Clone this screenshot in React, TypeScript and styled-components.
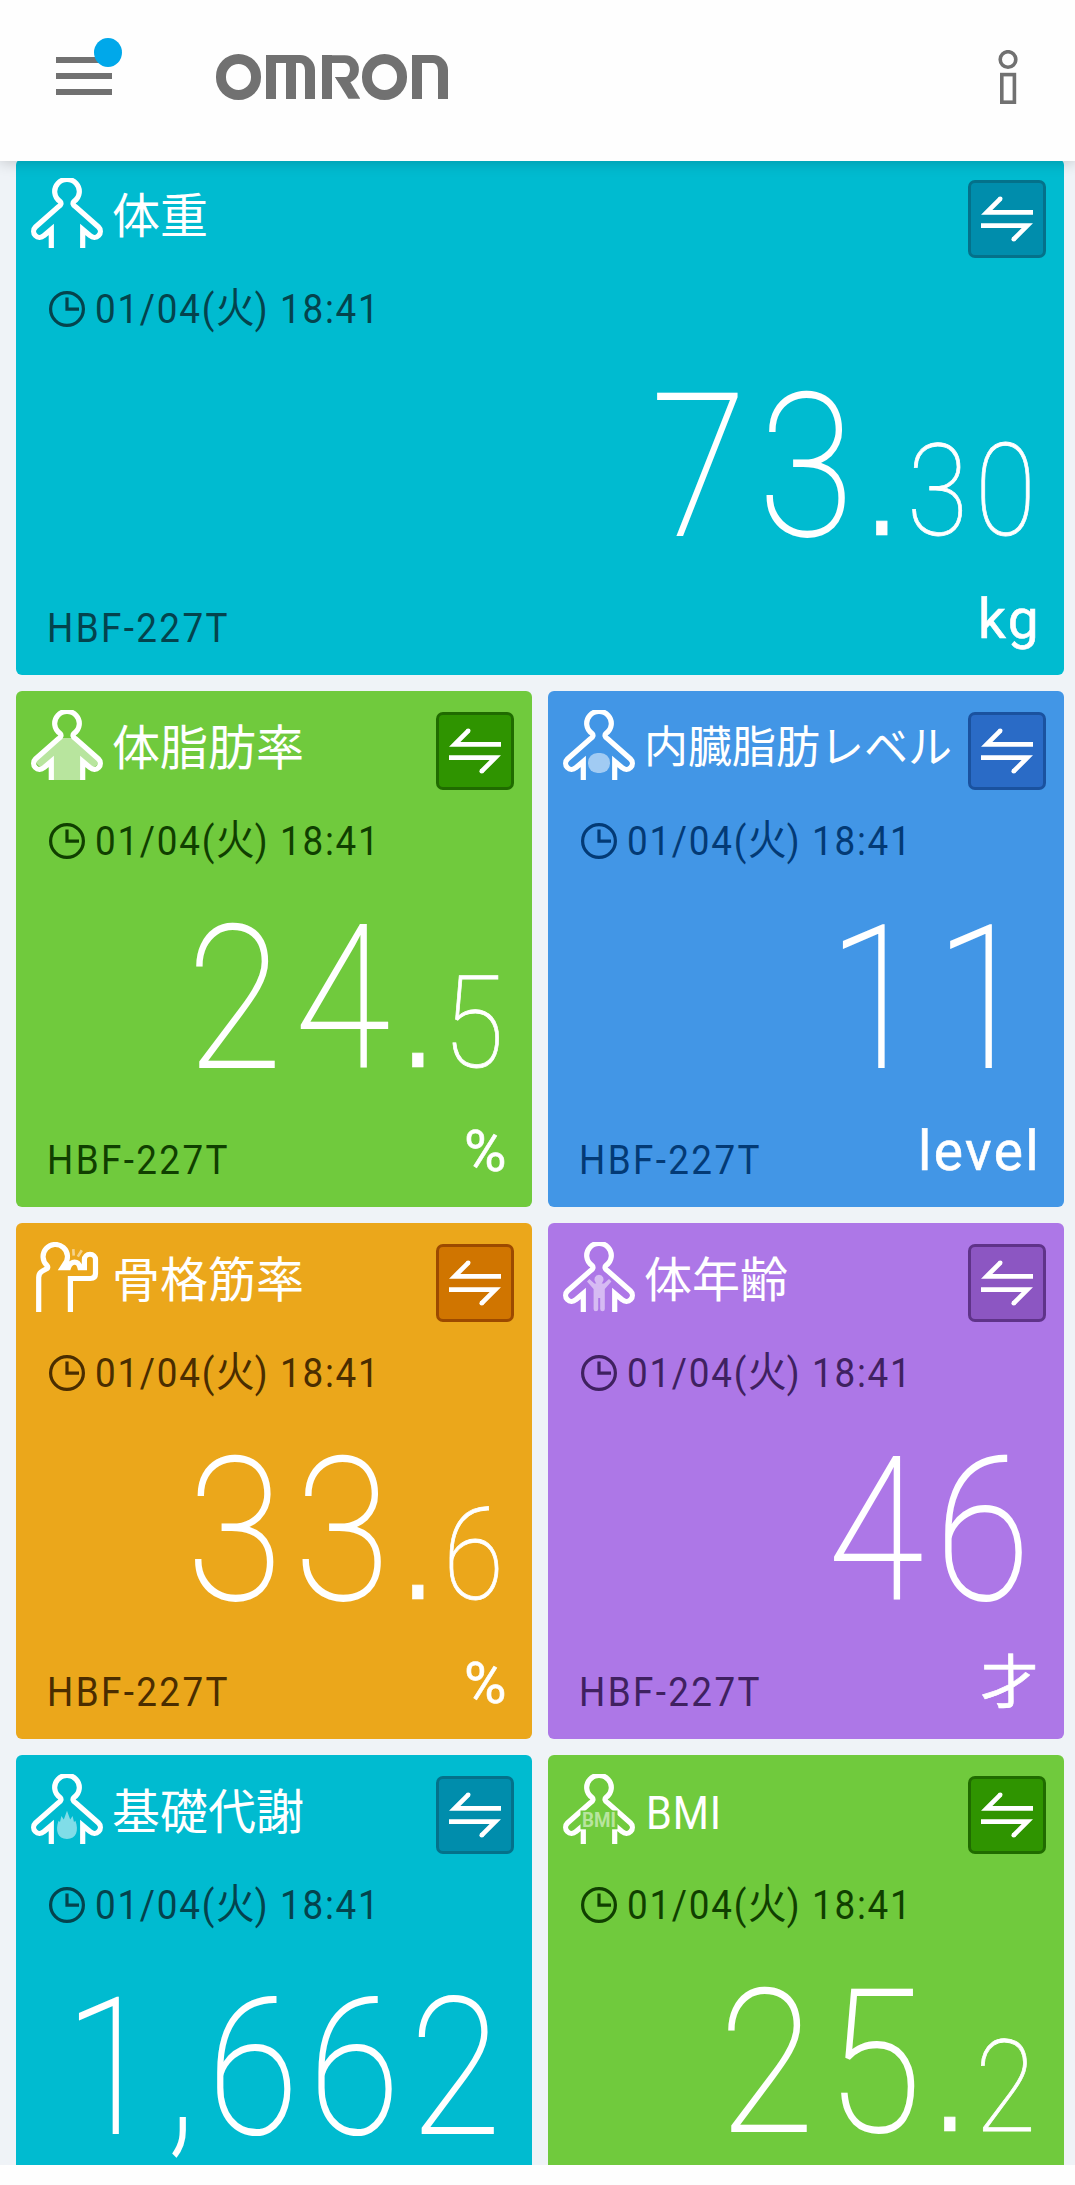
import React from "react";
import styled, { createGlobalStyle } from "styled-components";

const latin = `Roboto, "Noto Sans CJK JP", "Noto Sans", sans-serif`;
const japanese = `"Noto Sans CJK JP", Roboto, sans-serif`;
const ink = "#717171";

type Theme = { bg: string; text: string; button: string; edge: string };

const cyan: Theme = { bg: "#00bbd0", text: "#04434d", button: "#008dac", edge: "#04718a" };
const green: Theme = { bg: "#70ca3d", text: "#103f00", button: "#2f9400", edge: "#206b00" };
const blue: Theme = { bg: "#4296e6", text: "#033a75", button: "#2a6bc6", edge: "#1a529f" };
const orange: Theme = { bg: "#eba71b", text: "#4a2d00", button: "#d07500", edge: "#9c4a00" };
const purple: Theme = { bg: "#ad77e7", text: "#3f2160", button: "#8c56c2", edge: "#5f3389" };

const GlobalStyle = createGlobalStyle`
  * { box-sizing: border-box; }
  body { margin: 0; background: #fefefe; }
`;

const Screen = styled.div`
  width: 1075px;
  height: 2165px;
  overflow: hidden;
  background: #eff3f7;
  font-family: ${latin};
`;

const Header = styled.header`
  position: relative;
  z-index: 1;
  display: flex;
  align-items: flex-start;
  height: 161px;
  padding: 0 56px;
  background: #fefefe;
  box-shadow: 0 1px 14px rgba(0, 0, 0, 0.2);
`;

const MenuButton = styled.div`
  position: relative;
  display: flex;
  flex-direction: column;
  gap: 10px;
  width: 56px;
  margin-top: 57px;
`;

const MenuBar = styled.span`
  height: 6px;
  background: ${ink};
`;

const Badge = styled.span`
  position: absolute;
  top: -19px;
  left: 38px;
  width: 28px;
  height: 29px;
  border-radius: 50%;
  background: #00a8ea;
`;

const Logo = styled.div`
  display: flex;
  align-items: center;
  height: 46px;
  margin: 54px 0 0 104px;
`;

const Ring = styled.i`
  width: 45.4px;
  height: 45.4px;
  border: 10px solid ${ink};
  border-radius: 50%;
`;

const Arches = styled.i`
  display: flex;
  height: 43.4px;
  margin: 0 7px 0 4.3px;
`;

const Arch = styled.i<{ $width: number; $round?: boolean; $joined?: boolean }>`
  width: ${(p) => p.$width}px;
  height: 43.4px;
  margin-left: ${(p) => (p.$joined ? -10 : 0)}px;
  border: solid ${ink};
  border-width: 8.4px 10px 0;
  border-top-right-radius: ${(p) => (p.$round ? 15 : 0)}px;
`;

const Stem = styled.i`
  position: relative;
  width: 37.8px;
  height: 43.4px;
  margin-right: 1.8px;
  border-left: 10px solid ${ink};
`;

const Bowl = styled.i`
  position: absolute;
  top: 0;
  left: -10px;
  width: 36.6px;
  height: 28.2px;
  border: solid ${ink};
  border-width: 8.4px 9.8px 6.6px 0;
  border-radius: 0 15px 14px 0;
  clip-path: polygon(0 0, 100% 0, 100% 100%, 17px 100%, 12.8px 21.6px, 0 21.6px);
`;

const Leg = styled.i`
  position: absolute;
  top: 21.6px;
  left: 2.8px;
  width: 25.2px;
  height: 21.8px;
  background: ${ink};
  clip-path: polygon(0 0, 12px 0, 15.5px 5.6px, 100% 100%, 13.4px 100%);
`;

const InfoIcon = styled.svg`
  width: 20px;
  height: 55px;
  margin: 50px 1px 0 auto;
`;

const Grid = styled.main`
  display: grid;
  grid-template-columns: 516px 516px;
  grid-auto-rows: 516px;
  gap: 16px;
  margin: -2px 0 0 16px;
`;

const CardBox = styled.section<{ $theme: Theme; $wide?: boolean }>`
  grid-column: ${(p) => (p.$wide ? "span 2" : "auto")};
  display: flex;
  flex-direction: column;
  border-radius: 6px;
  background: ${(p) => p.$theme.bg};
  color: #fff;
`;

const CardHead = styled.div`
  display: flex;
  align-items: flex-start;
  height: 132px;
  padding: 19px 18px 0 15px;
`;

const BodyIcon = styled.svg`
  flex: none;
  width: 72px;
  height: 70px;
`;

const Title = styled.h2<{ $size: number }>`
  margin: 0 0 0 9px;
  font: 400 ${(p) => p.$size}px/69px ${japanese};
  white-space: nowrap;
`;

const LatinTitle = styled(Title)`
  margin-left: 11px;
  font-family: ${latin};
  line-height: 78px;
  letter-spacing: 1px;
  transform: scaleX(0.9);
  transform-origin: left;
`;

const SwapButton = styled.div<{ $theme: Theme }>`
  flex: none;
  width: 78px;
  height: 78px;
  margin: 2px 0 0 auto;
  border: 3px solid ${(p) => p.$theme.edge};
  border-radius: 7px;
  background: ${(p) => p.$theme.button};
`;

const SwapArrows = styled.svg`
  display: block;
  width: 72px;
  height: 72px;
`;

const Measured = styled.div<{ $theme: Theme }>`
  display: flex;
  align-items: center;
  height: 36px;
  padding-left: 33px;
  color: ${(p) => p.$theme.text};
`;

const ClockIcon = styled.svg`
  width: 36px;
  height: 36px;
  margin-right: 10px;
`;

const Time = styled.span`
  font-size: 40px;
  line-height: 38px;
  letter-spacing: 1.9px;
  white-space: pre;
  transform: scaleX(0.92);
  transform-origin: left;
`;

const Weekday = styled.span`
  font-size: 42px;
  letter-spacing: 0;
`;

const Value = styled.div<{ $compact?: boolean }>`
  display: flex;
  justify-content: flex-end;
  align-items: baseline;
  height: 222px;
  padding: ${(p) => (p.$compact ? "45px 20px" : "40px 21px")} 0 0;
  font-size: ${(p) => (p.$compact ? 190 : 199)}px;
  font-weight: 100;
  line-height: 201px;
  letter-spacing: ${(p) => (p.$compact ? 12.4 : 14.4)}px;
  -webkit-text-stroke: 2px #fff;
`;

const Digits = styled.div`
  display: flex;
  align-items: baseline;
  transform: scaleX(0.87);
  transform-origin: right;
`;

const Point = styled.span`
  font-family: "Liberation Sans", sans-serif;
  font-size: 130px;
  font-weight: 400;
  letter-spacing: 11px;
  -webkit-text-stroke-width: 0.5px;
`;

const Decimals = styled.span`
  font-size: 128px;
  letter-spacing: 8px;
  -webkit-text-stroke-width: 0.8px;
`;

const CardFoot = styled.div`
  display: flex;
  justify-content: space-between;
  align-items: flex-start;
  margin-top: 40px;
  padding: 0 23px 0 31px;
`;

const Model = styled.span<{ $theme: Theme }>`
  margin-top: 10px;
  font-size: 40px;
  line-height: 60px;
  letter-spacing: 2.6px;
  color: ${(p) => p.$theme.text};
  transform: scaleX(0.92);
  transform-origin: left;
`;

const Unit = styled.span<{ $symbol: boolean }>`
  font-size: ${(p) => (p.$symbol ? 58 : 55)}px;
  line-height: 60px;
  letter-spacing: 2.4px;
  -webkit-text-stroke: 0.6px #fff;
`;

type Kind = "weight" | "fat" | "visceral" | "muscle" | "age" | "metabolism" | "bmi";

const outline =
  "M20.3 70V51.4L12.8 57.7A6 6 0 0 1 4.5 49L27.6 28.6Q31.5 26 29 23.4A12.3 12.1 0 1 1 43 23.4Q40.5 26 44.4 28.6L67.5 49A6 6 0 0 1 59.2 57.7L51.7 51.4V70";

function Figure({ kind, bg }: { kind: Kind; bg: string }) {
  const soft = "rgba(255,255,255,0.5)";
  if (kind === "muscle") {
    return (
      <BodyIcon viewBox="0 0 72 70" fill="none" stroke="#fff" strokeWidth="5.2">
        <path d="M7.7 70V35.5Q7.7 31 11.5 29L16 26.6Q17.6 25.4 16 23.5A12.2 12.1 0 1 1 33.5 22.5L31.5 25.6H37.5Q39.5 20.2 43.6 20.2T49 25.6H53.4V17.5A5.5 5.2 0 0 1 64.5 17.5V31.5Q64.5 36.5 59.5 36.5H39.4V70" />
        <path d="M42.3 7.2L42.7 13.7M50.8 8.2L46.8 14.6" stroke={soft} strokeWidth="2.6" />
      </BodyIcon>
    );
  }
  return (
    <BodyIcon viewBox="0 0 72 70" fill="none">
      {kind === "fat" && (
        <path d="M30 28H42L69 53L62 58L51.7 50V70H20.3V50L10 58L4 52Z" fill={soft} />
      )}
      <path d={outline} stroke="#fff" strokeWidth="5.2" />
      {kind === "visceral" && <rect x="25" y="43" width="22" height="20" rx="9.5" fill={soft} />}
      {kind === "age" && (
        <path
          d="M36 32.8a4.6 4.6 0 0 1 3.4 7.7l-.8 1.1 2.4 0 5-4.6 2.4 2.4-6.6 7.6V67a2.3 2.3 0 0 1-4.6 0V56h-2V67a2.3 2.3 0 0 1-4.6 0V47L24 39.4 26.4 37l5 4.6 2 0-.8-1.1A4.6 4.6 0 0 1 36 32.8Z"
          fill={soft}
        />
      )}
      {kind === "metabolism" && (
        <path
          d="M36 36.8L39.2 45.4L41.6 42L43 48L44.4 46.8C48 56.5 45.4 65 36 65C26.6 65 24 56.5 27.6 46.8L29 48L30.4 42L32.8 45.4Z"
          fill={soft}
        />
      )}
      {kind === "bmi" && (
        <g
          textAnchor="middle"
          fontFamily="Roboto, sans-serif"
          fontWeight="700"
          fontSize="19.6"
        >
          <rect x="17.5" y="36.5" width="37" height="18.8" fill={bg} />
          <text x="36" y="53.2" textLength="34" lengthAdjust="spacingAndGlyphs" fill="#b8e59e">
            BMI
          </text>
        </g>
      )}
    </BodyIcon>
  );
}

type Metric = {
  kind: Kind;
  title: string;
  titleSize?: number;
  theme: Theme;
  whole: string;
  decimals?: string;
  unit?: string;
};

const metrics: Metric[] = [
  { kind: "weight", title: "体重", theme: cyan, whole: "73", decimals: "30", unit: "kg" },
  { kind: "fat", title: "体脂肪率", theme: green, whole: "24", decimals: "5", unit: "%" },
  { kind: "visceral", title: "内臓脂肪レベル", titleSize: 44, theme: blue, whole: "11", unit: "level" },
  { kind: "muscle", title: "骨格筋率", theme: orange, whole: "33", decimals: "6", unit: "%" },
  { kind: "age", title: "体年齢", theme: purple, whole: "46", unit: "才" },
  { kind: "metabolism", title: "基礎代謝", theme: cyan, whole: "1,662" },
  { kind: "bmi", title: "BMI", titleSize: 46, theme: green, whole: "25", decimals: "2" },
];

function Card({ metric }: { metric: Metric }) {
  const { kind, title, titleSize = 48, theme, whole, decimals, unit } = metric;
  const Heading = kind === "bmi" ? LatinTitle : Title;
  return (
    <CardBox $theme={theme} $wide={kind === "weight"}>
      <CardHead>
        <Figure kind={kind} bg={theme.bg} />
        <Heading $size={titleSize}>{title}</Heading>
        <SwapButton $theme={theme}>
          <SwapArrows viewBox="3 3 72 72" fill="none" stroke="#fff" strokeWidth="4.7">
            <path d="M32.2 18.8L18.7 32.3H65M13 45.7H59.3L45.8 59.2" />
            <g fill="#fff" stroke="none">
              <circle cx="32.2" cy="18.8" r="2.35" />
              <circle cx="45.8" cy="59.2" r="2.35" />
            </g>
          </SwapArrows>
        </SwapButton>
      </CardHead>
      <Measured $theme={theme}>
        <ClockIcon viewBox="0 0 36 36" fill="none" stroke="currentColor" strokeWidth="3.2">
          <circle cx="18" cy="18" r="16.4" />
          <path d="M18 6.6V18.2H30" />
        </ClockIcon>
        <Time>
          01/04(<Weekday>火</Weekday>) 18:41
        </Time>
      </Measured>
      <Value $compact={whole.length > 3}>
        <Digits>
          <span>{whole}</span>
          {decimals && <Point>.</Point>}
          {decimals && <Decimals>{decimals}</Decimals>}
        </Digits>
      </Value>
      {unit && (
        <CardFoot>
          <Model $theme={theme}>HBF-227T</Model>
          <Unit $symbol={unit.length === 1}>{unit}</Unit>
        </CardFoot>
      )}
    </CardBox>
  );
}

export default function App() {
  return (
    <>
      <GlobalStyle />
      <Screen>
        <Header>
          <MenuButton>
            <MenuBar />
            <MenuBar />
            <MenuBar />
            <Badge />
          </MenuButton>
          <Logo role="img" aria-label="OMRON">
            <Ring />
            <Arches>
              <Arch $width={30} />
              <Arch $width={29.6} $round $joined />
            </Arches>
            <Stem>
              <Bowl />
              <Leg />
            </Stem>
            <Ring />
            <Arches>
              <Arch $width={36.7} $round />
            </Arches>
          </Logo>
          <InfoIcon viewBox="0 0 20 55" fill="none" stroke={ink} strokeWidth="3.6">
            <circle cx="10" cy="9.5" r="7.8" />
            <rect x="3.8" y="24.6" width="12.6" height="27.6" />
          </InfoIcon>
        </Header>
        <Grid>
          {metrics.map((metric) => (
            <Card key={metric.kind} metric={metric} />
          ))}
        </Grid>
      </Screen>
    </>
  );
}
